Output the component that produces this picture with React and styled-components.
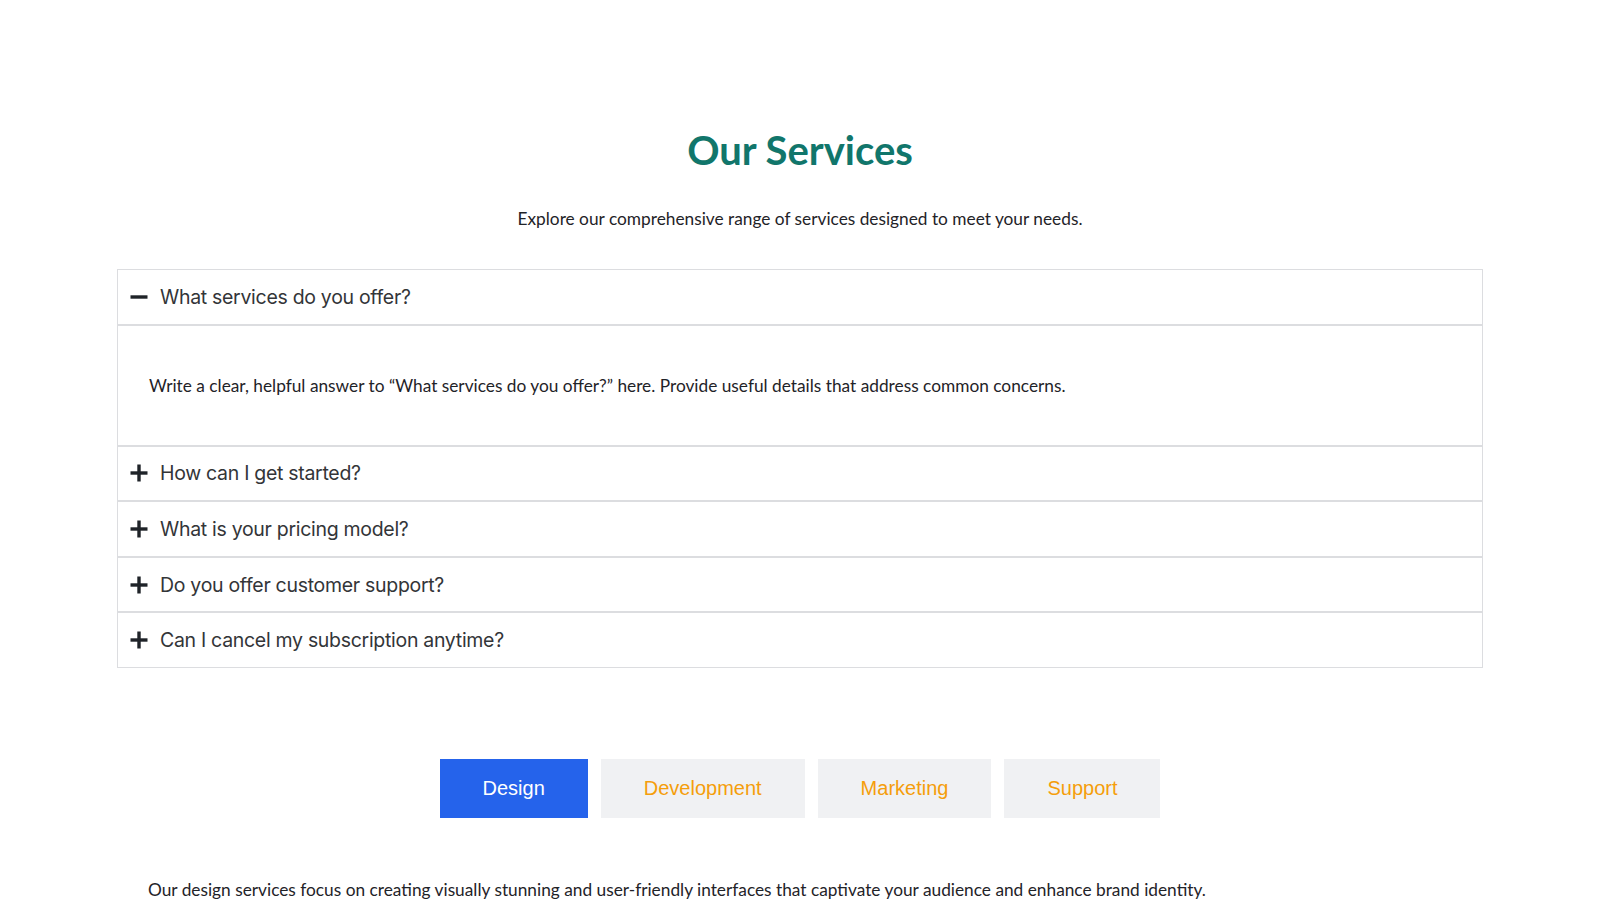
import React, { useState } from "react";
import styled, { createGlobalStyle } from "styled-components";

const GlobalStyle = createGlobalStyle`
  html, body {
    margin: 0;
    padding: 0;
    background: #ffffff;
  }
  body {
    font-family: Lato, "Open Sans", sans-serif;
  }
`;

const Page = styled.div`
  padding: 126px 117px 60px;
  box-sizing: border-box;
`;

const Header = styled.header`
  display: flex;
  flex-direction: column;
  align-items: center;
`;

const Title = styled.h1`
  margin: 0;
  color: #11766b;
  font-family: Lato, sans-serif;
  font-size: 40px;
  font-weight: 700;
  line-height: 48px;
`;

const Subtitle = styled.p`
  margin: 33px 0 0;
  color: #1f2328;
  font-size: 17.3px;
  line-height: 24px;
`;

const Accordion = styled.div`
  margin-top: 38px;
  border: 1px solid #dcdde0;
`;

const Item = styled.div`
  & + & {
    border-top: 2px solid #dcdde0;
  }
`;

const Question = styled.button`
  width: 100%;
  height: 53.6px;
  display: flex;
  align-items: center;
  gap: 12px;
  padding: 0 12px;
  border: none;
  background: #ffffff;
  cursor: pointer;
  font-family: Inter, sans-serif;
  font-size: 19.5px;
  font-weight: 400;
  letter-spacing: -0.3px;
  color: #333538;
  text-align: left;
`;

const Answer = styled.div`
  border-top: 2px solid #dcdde0;
  height: 119px;
  display: flex;
  align-items: center;
  padding: 0 31px;
  font-size: 17.3px;
  color: #1f2328;
`;

const Tabs = styled.div`
  display: flex;
  justify-content: center;
  gap: 13px;
  margin-top: 91px;
`;

const Tab = styled.button`
  height: 59px;
  padding: 0 43px;
  border: none;
  background: ${(p) => (p.$active ? "#2563eb" : "#f0f1f3")};
  color: ${(p) => (p.$active ? "#ffffff" : "#f59e0b")};
  font-family: "Liberation Sans", Arial, sans-serif;
  font-size: 20px;
  cursor: pointer;
`;

const TabText = styled.p`
  margin: 60px 0 0;
  padding-left: 31px;
  font-size: 17.3px;
  line-height: 24px;
  color: #1f2328;
`;

const Icon = ({ open }) => (
  <svg width="18" height="18" viewBox="0 0 18 18">
    <rect x="0.5" y="7.3" width="17" height="3.4" fill="#1f2328" />
    {!open && <rect x="7.3" y="0.5" width="3.4" height="17" fill="#1f2328" />}
  </svg>
);

const faqs = [
  "What services do you offer?",
  "How can I get started?",
  "What is your pricing model?",
  "Do you offer customer support?",
  "Can I cancel my subscription anytime?",
];

const tabs = {
  Design:
    "Our design services focus on creating visually stunning and user-friendly interfaces that captivate your audience and enhance brand identity.",
  Development:
    "Our development team builds fast, reliable and scalable applications tailored to your business goals.",
  Marketing:
    "Our marketing services help you reach the right audience and grow your brand with data-driven campaigns.",
  Support:
    "Our support team is available around the clock to help you with any questions or issues.",
};

export default function App() {
  const [open, setOpen] = useState(0);
  const [tab, setTab] = useState("Design");

  return (
    <Page>
      <GlobalStyle />
      <Header>
        <Title>Our Services</Title>
        <Subtitle>
          Explore our comprehensive range of services designed to meet your needs.
        </Subtitle>
      </Header>

      <Accordion>
        {faqs.map((q, i) => (
          <Item key={q}>
            <Question onClick={() => setOpen(open === i ? -1 : i)}>
              <Icon open={open === i} />
              {q}
            </Question>
            {open === i && (
              <Answer>
                Write a clear, helpful answer to “{q}” here. Provide useful details
                that address common concerns.
              </Answer>
            )}
          </Item>
        ))}
      </Accordion>

      <Tabs>
        {Object.keys(tabs).map((t) => (
          <Tab key={t} $active={tab === t} onClick={() => setTab(t)}>
            {t}
          </Tab>
        ))}
      </Tabs>
      <TabText>{tabs[tab]}</TabText>
    </Page>
  );
}
